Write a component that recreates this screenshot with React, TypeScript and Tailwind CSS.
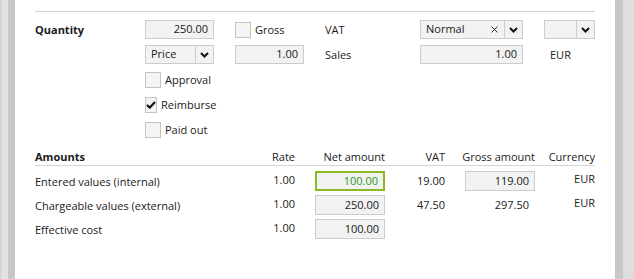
import React from "react"

const font = { fontFamily: '"Open Sans", "Noto Sans", sans-serif' }

const Chevron = () => (
  <svg width="9" height="6" viewBox="0 0 9 6" className="block">
    <path d="M1 1 L4.5 4.5 L8 1" fill="none" stroke="#111" strokeWidth="2" />
  </svg>
)

const Cross = () => (
  <svg width="7" height="7" viewBox="0 0 7 7" className="block">
    <path d="M0.5 0.5 L6.5 6.5 M6.5 0.5 L0.5 6.5" fill="none" stroke="#333" strokeWidth="1" />
  </svg>
)

const NumBox = ({ value, green, className = "" }: { value: string; green?: boolean; className?: string }) => (
  <div
    className={
      green
        ? `h-[20px] flex items-center justify-end pr-[5px] bg-[#f2f2f2] border-2 border-[#88bb22] text-[#2c9a1c] ${className}`
        : `h-[19px] flex items-center justify-end pr-[5px] bg-[#f2f2f2] border border-[#cccccc] ${className}`
    }
  >
    {value}
  </div>
)

const Select = ({ value, clear }: { value: string; clear?: boolean }) => (
  <div className="h-[19px] flex items-center bg-[#f2f2f2] border border-[#cccccc]">
    <span className="flex-1 pl-[5px]">{value}</span>
    {clear && (
      <span className="pr-[6px]">
        <Cross />
      </span>
    )}
    <span className="w-[18px] h-full flex items-center justify-center border-l border-[#cccccc]">
      <Chevron />
    </span>
  </div>
)

const Check = ({ label, checked }: { label: string; checked?: boolean }) => (
  <div className="flex items-center gap-[4px] whitespace-nowrap">
    <div className="w-[16px] h-[16px] bg-[#f4f4f4] border border-[#c4c4c4] flex items-center justify-center">
      {checked && (
        <svg width="10" height="8" viewBox="0 0 10 8">
          <path d="M1 4 L3.8 6.6 L9 1" fill="none" stroke="#111" strokeWidth="2.2" />
        </svg>
      )}
    </div>
    <span className="pt-[1px]">{label}</span>
  </div>
)

export default function App() {
  return (
    <div className="flex w-[634px] h-[279px] overflow-hidden text-[11px] text-[#1a1a1a]" style={font}>
      {/* left frame */}
      <div className="flex shrink-0">
        <div className="w-[2px] bg-[#d6d6d6]" />
        <div className="w-[6px] bg-[#e2e2e2]" />
        <div className="w-[7px] bg-[#c8c8c8]" />
      </div>

      {/* content */}
      <div className="flex-1 bg-white px-[20px]">
        <div className="mt-[11px] border-t border-[#d4d4d4] pt-[8px]">
          <div className="grid grid-cols-[89px_69px_69px_74px_103px_51px] gap-x-[21px] auto-rows-[19px] gap-y-[6px] items-center">
            <div className="font-bold pt-[2px]">Quantity</div>
            <NumBox value="250.00" />
            <Check label="Gross" />
            <div className="pt-[2px]">VAT</div>
            <Select value="Normal" clear />
            <Select value="" />

            <div />
            <Select value="Price" />
            <NumBox value="1.00" />
            <div className="pt-[2px]">Sales</div>
            <NumBox value="1.00" />
            <div className="pl-[6px] pt-[2px]">EUR</div>

            <div />
            <Check label="Approval" />
            <div className="col-span-4" />

            <div />
            <Check label="Reimburse" checked />
            <div className="col-span-4" />

            <div />
            <Check label="Paid out" />
            <div className="col-span-4" />
          </div>
        </div>

        {/* amounts table */}
        <div className="mt-[9px] grid grid-cols-[200px_60px_90px_60px_90px_60px] h-[18px] items-center border-b border-[#d4d4d4]">
          <div className="font-bold pt-[1px]">Amounts</div>
          <div className="text-right">Rate</div>
          <div className="text-right">Net amount</div>
          <div className="text-right">VAT</div>
          <div className="text-right whitespace-nowrap">Gross amount</div>
          <div className="text-right">Currency</div>
        </div>

        <div className="mt-[5px] grid grid-cols-[200px_60px_90px_60px_90px_60px] auto-rows-[20px] gap-y-[4px] items-center">
          <div className="pt-[3px]">Entered values (internal)</div>
          <div className="text-right -mt-[1px]">1.00</div>
          <NumBox value="100.00" green className="w-[70px] justify-self-end pr-[4px]" />
          <div className="text-right">19.00</div>
          <NumBox value="119.00" className="w-[70px] h-[20px] justify-self-end" />
          <div className="text-right -mt-[3px]">EUR</div>

          <div className="pt-[3px]">Chargeable values (external)</div>
          <div className="text-right -mt-[1px]">1.00</div>
          <NumBox value="250.00" className="w-[70px] h-[20px] justify-self-end" />
          <div className="text-right">47.50</div>
          <div className="text-right pr-[6px]">297.50</div>
          <div className="text-right -mt-[3px]">EUR</div>

          <div className="pt-[3px]">Effective cost</div>
          <div className="text-right -mt-[1px]">1.00</div>
          <NumBox value="100.00" className="w-[70px] h-[20px] justify-self-end" />
          <div />
          <div />
          <div />
        </div>
      </div>

      {/* right frame */}
      <div className="flex shrink-0">
        <div className="w-[8px] bg-[#c8c8c8]" />
        <div className="w-[11px] bg-[#dedede]" />
      </div>
    </div>
  )
}
